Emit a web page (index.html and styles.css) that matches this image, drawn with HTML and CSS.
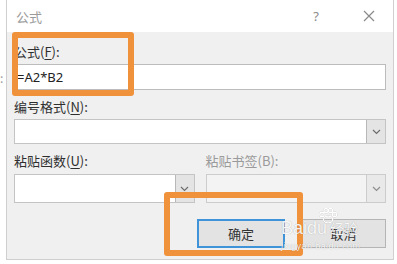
FILE: index.html
```html
<!DOCTYPE html>
<html lang="zh-CN">
<head>
<meta charset="utf-8">
<title>公式</title>
<link rel="stylesheet" href="styles.css">
</head>
<body>
<span class="behind">:</span>
<div class="dialog">
  <div class="titlebar">
    <span class="title">公式</span>
    <div class="controls">
      <span class="help">?</span>
      <svg class="close" width="12" height="12" viewBox="0 0 12 12"><path d="M1 1L11 11M11 1L1 11" stroke="#8a8a8a" stroke-width="1.2" fill="none"/></svg>
    </div>
  </div>
  <div class="content">
    <div class="field">
      <label class="lbl">公式(<u>F</u>):</label>
      <div class="input">=A2*B2</div>
    </div>
    <div class="field">
      <label class="lbl">编号格式(<u>N</u>):</label>
      <div class="select short">
        <span class="value"></span>
        <span class="drop"><svg width="9" height="6" viewBox="0 0 9 6"><path d="M1 1L4.5 4.5L8 1" stroke="#6d6d6d" stroke-width="1.2" fill="none"/></svg></span>
      </div>
    </div>
    <div class="cols">
      <div class="col">
        <label class="lbl">粘贴函数(<u>U</u>):</label>
        <div class="select tall">
          <span class="value"></span>
          <span class="drop"><svg width="9" height="6" viewBox="0 0 9 6"><path d="M1 1L4.5 4.5L8 1" stroke="#6d6d6d" stroke-width="1.2" fill="none"/></svg></span>
        </div>
      </div>
      <div class="col">
        <label class="lbl disabled">粘贴书签(B):</label>
        <div class="select tall off">
          <span class="value"></span>
          <span class="drop"><svg width="9" height="6" viewBox="0 0 9 6"><path d="M1 1L4.5 4.5L8 1" stroke="#8d8d8d" stroke-width="1.2" fill="none"/></svg></span>
        </div>
      </div>
    </div>
    <div class="buttons">
      <button class="btn primary">确定</button>
      <button class="btn">取消</button>
    </div>
  </div>
</div>
<div class="mark mark1"></div>
<div class="mark mark2"></div>
<div class="watermark">
  <svg class="paw" width="20" height="16" viewBox="0 0 20 16"><circle cx="4" cy="6.5" r="2.2" fill="none" stroke="#fff" stroke-width="1.4"/><circle cx="8" cy="2.6" r="2.1" fill="none" stroke="#fff" stroke-width="1.4"/><circle cx="12.5" cy="2.6" r="2.1" fill="none" stroke="#fff" stroke-width="1.4"/><circle cx="16.5" cy="6.5" r="2.2" fill="none" stroke="#fff" stroke-width="1.4"/><ellipse cx="10.2" cy="11.5" rx="4.6" ry="3.4" fill="none" stroke="#fff" stroke-width="1.4"/></svg>
  <div class="wm-main"><span>Bai</span><span>du</span><span class="wm-cn">经验</span></div>
  <div class="wm-url">jingyan.baidu.com</div>
</div>
</body>
</html>
```
FILE: styles.css
```css
html, body {
  margin: 0;
  padding: 0;
  background: #ffffff;
  width: 397px;
  height: 264px;
  overflow: hidden;
  font-family: "Noto Sans CJK SC", "Noto Sans", sans-serif;
  font-size: 13px;
  color: #333;
  position: relative;
}

.behind {
  position: absolute;
  left: 0;
  top: 69px;
  color: #9a9a9a;
  font-size: 12px;
}

.dialog {
  margin-left: 6px;
  width: 386px;
  height: 259px;
  border: 1px solid #cfcfcf;
  border-top: none;
  display: flex;
  flex-direction: column;
  background: #f0f0f0;
}

.titlebar {
  height: 32px;
  background: #ffffff;
  display: flex;
  align-items: center;
  justify-content: space-between;
  padding-left: 9px;
  padding-right: 18px;
  flex: none;
}

.title {
  color: #9b9b9b;
  font-size: 13px;
}

.controls {
  display: flex;
  align-items: center;
  gap: 44px;
}

.help {
  color: #8a8a8a;
  font-family: "Noto Sans", sans-serif;
  font-size: 13px;
}

.content {
  padding: 12px 7px 0 7px;
  display: flex;
  flex-direction: column;
}

.field, .col {
  display: flex;
  flex-direction: column;
}

.field + .field, .field + .cols {
  margin-top: 9px;
}

.lbl {
  line-height: 16px;
  height: 16px;
  margin-bottom: 4px;
  color: #2f2f2f;
  font-size: 13px;
}

.lbl u {
  text-decoration-thickness: 1px;
  text-underline-offset: 2px;
}

.lbl.disabled {
  color: #9a9a9a;
}

.input {
  height: 24px;
  border: 1px solid #bcbcbc;
  background: #fff;
  display: flex;
  align-items: center;
  padding-left: 2px;
  font-family: "Noto Sans", sans-serif;
  font-size: 13px;
  color: #222;
}

.select {
  display: flex;
  border: 1px solid #c4c4c4;
  background: #fff;
}

.select.short { height: 23px; }
.select.tall { height: 27px; margin-top: 1px; }

.select .value { flex: 1; }

.select .drop {
  width: 18px;
  background: #e4e4e4;
  border-left: 1px solid #b8b8b8;
  display: flex;
  align-items: center;
  justify-content: center;
}

.select.off {
  background: #f3f3f3;
  border-color: #cccccc;
}

.select.off .drop {
  background: #e9e9e9;
  border-left-color: #cccccc;
}

.cols {
  display: flex;
  gap: 11px;
}

.col { flex: 1; }

.buttons {
  margin-top: 16px;
  display: flex;
  justify-content: flex-end;
  gap: 16px;
}

.btn {
  width: 85px;
  height: 29px;
  border: 1px solid #b5b5b5;
  background: #e3e3e3;
  font-family: "Noto Sans CJK SC", sans-serif;
  font-size: 13px;
  color: #333;
  padding: 0;
}

.btn.primary {
  width: 88px;
  border: 2px solid #3f93d8;
}

.mark {
  position: absolute;
  border: 6px solid #f0913b;
  border-radius: 3px;
  box-sizing: border-box;
}

.mark1 {
  left: 12px;
  top: 32px;
  width: 122px;
  height: 64px;
}

.mark2 {
  left: 164px;
  top: 192px;
  width: 139px;
  height: 64px;
}

.watermark {
  position: absolute;
  left: 281px;
  top: 206px;
  width: 90px;
  color: rgba(255, 255, 255, 0.92);
  text-shadow: 0 0 1px rgba(0, 0, 0, 0.3);
}

.paw {
  position: absolute;
  left: 37px;
  top: 2px;
  filter: drop-shadow(0 0 0.6px rgba(0, 0, 0, 0.35));
}

.wm-main {
  display: flex;
  align-items: flex-end;
  font-family: "Liberation Sans", sans-serif;
  font-size: 18px;
  line-height: 18px;
  height: 31px;
}

.wm-cn {
  font-family: "Noto Sans CJK SC", sans-serif;
  font-size: 14px;
  line-height: 18px;
  margin-left: 3px;
}

.wm-url {
  font-family: "Liberation Sans", sans-serif;
  font-size: 9px;
  line-height: 10px;
  letter-spacing: 0.4px;
  margin-top: 4px;
}
```
